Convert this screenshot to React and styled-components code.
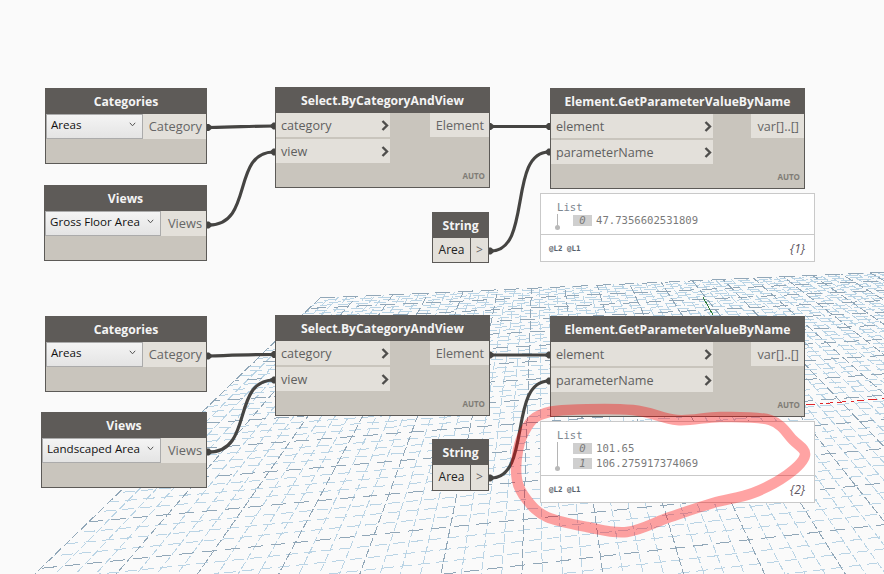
import React from "react";
import styled, { createGlobalStyle } from "styled-components";

const Global = createGlobalStyle`
  html, body { margin: 0; padding: 0; background: #fafafa; }
  #root { width: 884px; height: 574px; overflow: hidden; }
`;

const Canvas = styled.div`
  position: relative;
  width: 884px;
  height: 574px;
  overflow: hidden;
  background: #fafafa;
  font-family: "Open Sans", "Liberation Sans", sans-serif;
`;

const Layer = styled.svg`
  position: absolute;
  left: 0;
  top: 0;
  width: 884px;
  height: 574px;
  pointer-events: none;
`;

const NodeBox = styled.div`
  position: absolute;
  left: ${(p) => p.$x}px;
  top: ${(p) => p.$y}px;
  width: ${(p) => p.$w}px;
  height: ${(p) => p.$h}px;
  box-sizing: border-box;
  border: 1px solid #5c5a57;
  background: #c9c5bd;
  display: flex;
  flex-direction: column;
`;

const Header = styled.div`
  height: 26px;
  flex: none;
  margin: -1px -1px 0;
  background: #5e5b58;
  color: #f4f4f4;
  font-size: 12.2px;
  font-weight: 700;
  line-height: 27px;
  text-align: center;
  white-space: nowrap;
  overflow: hidden;
`;

const Body = styled.div`
  flex: 1;
  display: flex;
  justify-content: space-between;
  align-items: flex-start;
  position: relative;
`;

const Inputs = styled.div`
  display: flex;
  flex-direction: column;
  gap: 2px;
  width: ${(p) => p.$w}px;
`;

const InputRow = styled.div`
  box-sizing: border-box;
  height: 24px;
  background: #e3e0da;
  color: #5f5f5f;
  font-size: 12.6px;
  padding: 1px 1px 0 5px;
  display: flex;
  align-items: center;
  justify-content: space-between;
`;

const Output = styled.div`
  height: 24px;
  background: #e3e0da;
  color: #666;
  font-size: 12.6px;
  line-height: 26px;
  padding: 0 5px 0 6px;
  white-space: nowrap;
  overflow: hidden;
`;

const SelectorRow = styled.div`
  width: 100%;
  height: 25px;
  display: flex;
  background: #e3e0da;
`;

const Combo = styled.div`
  box-sizing: border-box;
  width: ${(p) => p.$w}px;
  height: 25px;
  border: 1px solid #ababab;
  background: linear-gradient(#f4f4f4, #e4e4e4);
  color: #111;
  font-size: 11.6px;
  padding: 0 6px 5px 4px;
  display: flex;
  align-items: center;
  justify-content: space-between;
  white-space: nowrap;
`;

const SelectorOut = styled.div`
  flex: 1;
  text-align: right;
  color: #666;
  font-size: 12.8px;
  line-height: 25px;
  padding-right: 4px;
  overflow: hidden;
`;

const AutoTag = styled.span`
  position: absolute;
  right: 4px;
  bottom: 6px;
  color: #7f7c76;
  font-size: 8px;
  font-weight: 700;
  line-height: 10px;
`;

const StringRow = styled.div`
  display: flex;
  flex: 1;
  min-height: 0;
  width: 100%;
  background: #5e5b58;
  gap: 1px;
`;

const StringField = styled.div`
  width: 37px;
  background: #e3e0da;
  color: #222;
  font-size: 12px;
  line-height: 24px;
  text-align: center;
  overflow: hidden;
`;

const StringPort = styled.div`
  flex: 1;
  background: #e3e0da;
  color: #666;
  font-size: 12px;
  line-height: 24px;
  text-align: center;
  overflow: hidden;
`;

const Watch = styled.div`
  position: absolute;
  left: 540px;
  top: ${(p) => p.$y}px;
  width: 275px;
  height: ${(p) => p.$h}px;
  box-sizing: border-box;
  border: 1px solid #c9c9c9;
  background: #fff;
  display: flex;
  flex-direction: column;
`;

const WatchTree = styled.div`
  flex: 1;
  border-bottom: 1px solid #c9c9c9;
  padding: 6px 0 0 16px;
  font-family: "DejaVu Sans Mono", "Liberation Mono", monospace;
  font-size: 10.6px;
  color: #7d8790;
  position: relative;
`;

const ListLabel = styled.div`
  line-height: 14px;
`;

const TreeRows = styled.div`
  display: flex;
  flex-direction: column;
  gap: 4px;
  margin: 0 0 0 16px;
  padding-top: 1px;
`;

const TreeRow = styled.div`
  display: flex;
  align-items: center;
  gap: 4px;
  height: 11px;
`;

const TreeIndex = styled.span`
  width: 19px;
  height: 11px;
  background: #cfcfcf;
  color: #7b7b7b;
  font-style: italic;
  line-height: 11px;
  text-align: center;
`;

const TreeValue = styled.span`
  color: #7a7a7a;
  line-height: 11px;
`;

const TreeStem = styled.i`
  position: absolute;
  left: 16px;
  top: 20px;
  bottom: ${(p) => p.$bottom}px;
  border-left: 1px solid #b5b5b5;
  &::after {
    content: "";
    position: absolute;
    left: -3px;
    bottom: -4px;
    width: 5px;
    height: 5px;
    border-radius: 50%;
    background: #b9b9b9;
  }
`;

const WatchFooter = styled.div`
  height: 26px;
  flex: none;
  display: flex;
  align-items: center;
  justify-content: space-between;
  padding: 0 9px 0 8px;
`;

const Levels = styled.span`
  font-family: "DejaVu Sans Mono", "Liberation Mono", monospace;
  font-size: 7.5px;
  font-weight: 700;
  color: #56606a;
`;

const Count = styled.span`
  font-size: 12px;
  font-style: italic;
  color: #5d5560;
`;

/* ---------- perspective grid ---------- */
const VP1 = [538, 87];
const VP2 = [4700, 97];
const O = [320, 298];
const A = 0.00845;
const B = -0.0468;
const DIV = 4;

const project = (u, v) => {
  const w = A * u + B * v + 1;
  return [
    (A * u * VP2[0] + B * v * VP1[0] + O[0]) / w,
    (A * u * VP2[1] + B * v * VP1[1] + O[1]) / w,
  ];
};

const fmt = (p) => `${p[0].toFixed(1)} ${p[1].toFixed(1)}`;

const buildGrid = () => {
  const vMax = 17;
  const uMax = 26;
  const depthLines = [];
  const crossLines = [];
  for (let i = 0; i <= uMax * DIV; i++) {
    const u = i / DIV;
    depthLines.push({ d: `M${fmt(project(u, 0))}L${fmt(project(u, vMax))}`, off: (i * 7) % 11, major: i % DIV === 0 });
  }
  for (let i = 0; i <= vMax * DIV; i++) {
    const v = i / DIV;
    crossLines.push({ d: `M${fmt(project(0, v))}L${fmt(project(uMax, v))}`, off: (i * 11) % 23, major: i % DIV === 0 });
  }
  return { depthLines, crossLines };
};

const grid = buildGrid();

const GridLine = styled.path`
  stroke: ${(p) => (p.$major ? "#91a7b8" : "#bad4e5")};
  stroke-width: 1;
  stroke-dasharray: ${(p) => p.$dash};
`;

const Grid = () => (
  <Layer viewBox="0 0 884 574" shapeRendering="crispEdges" fill="none">
    {grid.depthLines.filter((l) => !l.major).map((l, i) => (
      <GridLine key={i} d={l.d} $dash="8 3" strokeDashoffset={l.off} />
    ))}
    {grid.crossLines.filter((l) => !l.major).map((l, i) => (
      <GridLine key={i} d={l.d} $dash="12 6" strokeDashoffset={l.off} />
    ))}
    {grid.depthLines.filter((l) => l.major).map((l, i) => (
      <GridLine key={i} d={l.d} $major $dash="9 3" strokeDashoffset={l.off} />
    ))}
    {grid.crossLines.filter((l) => l.major).map((l, i) => (
      <GridLine key={i} d={l.d} $major $dash="15 8" strokeDashoffset={l.off} />
    ))}
    <path d="M703 297L713 315" stroke="#2f7d3a" />
    <path d="M806 405L884 398.5" stroke="#e0262a" strokeDasharray="9 5 3 3 7 4" />
  </Layer>
);

/* ---------- wires ---------- */
const wires = [
  "M209 127.5C240 127 250 126 274 126",
  "M209 225C254 225 231 152 274 152",
  "M491 126.5L549 126.5",
  "M491 251C532 251 508 152 549 152",
  "M209 356C240 355 250 354.500 274 354.500",
  "M209 452C254 452 231 380 274 380",
  "M491 355L549 355",
  "M491 478C532 478 508 381 549 381",
];

const outTabs = [[207, 127.5], [207, 225], [489, 126.5], [489, 251], [207, 356], [207, 452], [489, 355], [489, 478]];
const inTabs = [[275, 126], [275, 152], [550, 126.5], [550, 152], [275, 354.5], [275, 380], [550, 355], [550, 381]];

const Wires = () => (
  <Layer viewBox="0 0 884 574" fill="none">
    {wires.map((d, i) => (
      <path key={i} d={d} stroke="#454442" strokeWidth="3.200" />
    ))}
    {outTabs.map(([x, y], i) => (
      <path key={i} d={`M${x} ${y - 3.5}h2l2.500 2v3l-2.500 2h-2z`} fill="#454442" />
    ))}
    {inTabs.map(([x, y], i) => (
      <path key={i} d={`M${x} ${y - 3.5}h-2l-2.500 2.500v2l2.500 2.500h2z`} fill="#454442" />
    ))}
  </Layer>
);

/* ---------- annotation ---------- */
const ringPts = [
  [567, 410], [633, 410], [677, 420], [720, 417], [770, 420], [793, 440], [805, 455], [787, 475],
  [753, 493], [713, 503], [670, 517], [627, 532], [587, 527], [547, 517], [527, 500], [517, 480],
  [518, 450], [527, 427], [540, 415],
];

const smooth = (pts) => {
  const n = pts.length;
  let d = `M${pts[0][0]} ${pts[0][1]}`;
  for (let i = 0; i < n; i++) {
    const p0 = pts[(i - 1 + n) % n];
    const p1 = pts[i];
    const p2 = pts[(i + 1) % n];
    const p3 = pts[(i + 2) % n];
    const c1 = [p1[0] + (p2[0] - p0[0]) / 6, p1[1] + (p2[1] - p0[1]) / 6];
    const c2 = [p2[0] - (p3[0] - p1[0]) / 6, p2[1] - (p3[1] - p1[1]) / 6];
    d += `C${c1[0].toFixed(1)} ${c1[1].toFixed(1)} ${c2[0].toFixed(1)} ${c2[1].toFixed(1)} ${p2[0]} ${p2[1]}`;
  }
  return d + "Z";
};

const Ring = () => (
  <Layer viewBox="0 0 884 574" fill="none">
    <path d={smooth(ringPts)} stroke="#ff0000" strokeOpacity="0.36" strokeWidth="10.500" strokeLinejoin="round" />
  </Layer>
);

/* ---------- small drawings ---------- */
const Chevron = () => (
  <svg width="8" height="11" viewBox="0 0 8 11" fill="none">
    <path d="M1.500 1L6 5.500L1.500 10" stroke="#4f4e4c" strokeWidth="2.400" />
  </svg>
);

const Caret = () => (
  <svg width="7" height="5" viewBox="0 0 7 5" fill="none">
    <path d="M0.800 0.800L3.500 3.800L6.200 0.800" stroke="#555" strokeWidth="1" />
  </svg>
);

/* ---------- node kinds ---------- */
const SelectorNode = ({ x, y, w, comboW, title, value, out }) => (
  <NodeBox $x={x} $y={y} $w={w} $h={76}>
    <Header>{title}</Header>
    <Body>
      <SelectorRow>
        <Combo $w={comboW}>
          <span>{value}</span>
          <Caret />
        </Combo>
        <SelectorOut>{out}</SelectorOut>
      </SelectorRow>
    </Body>
  </NodeBox>
);

const FunctionNode = ({ x, y, w, h, inW, title, inputs, out }) => (
  <NodeBox $x={x} $y={y} $w={w} $h={h}>
    <Header>{title}</Header>
    <Body>
      <Inputs $w={inW}>
        {inputs.map((name) => (
          <InputRow key={name}>
            <span>{name}</span>
            <Chevron />
          </InputRow>
        ))}
      </Inputs>
      <Output>{out}</Output>
      <AutoTag>AUTO</AutoTag>
    </Body>
  </NodeBox>
);

const StringNode = ({ y, h }) => (
  <NodeBox $x={432} $y={y} $w={57} $h={h}>
    <Header>String</Header>
    <StringRow>
      <StringField>Area</StringField>
      <StringPort>&gt;</StringPort>
    </StringRow>
  </NodeBox>
);

const WatchNode = ({ y, h, values, count, stemBottom }) => (
  <Watch $y={y} $h={h}>
    <WatchTree>
      <ListLabel>List</ListLabel>
      <TreeStem $bottom={stemBottom} />
      <TreeRows>
        {values.map((val, i) => (
          <TreeRow key={val}>
            <TreeIndex>{i}</TreeIndex>
            <TreeValue>{val}</TreeValue>
          </TreeRow>
        ))}
      </TreeRows>
    </WatchTree>
    <WatchFooter>
      <Levels>@L2 @L1</Levels>
      <Count>{count}</Count>
    </WatchFooter>
  </Watch>
);

const SELECT = "Select.ByCategoryAndView";
const GET = "Element.GetParameterValueByName";

export default function App() {
  return (
    <Canvas>
      <Global />
      <Grid />
      <Wires />

      <SelectorNode x={45} y={88} w={162} comboW={97} title="Categories" value="Areas" out="Category" />
      <SelectorNode x={44} y={185} w={163} comboW={116} title="Views" value="Gross Floor Area" out="Views" />
      <FunctionNode x={275} y={87} w={215} h={101} inW={114} title={SELECT} inputs={["category", "view"]} out="Element" />
      <FunctionNode x={550} y={88} w={255} h={101} inW={162} title={GET} inputs={["element", "parameterName"]} out="var[]..[]" />
      <StringNode y={212} h={51} />
      <WatchNode y={193} h={69} values={["47.7356602531809"]} count="{1}" stemBottom={8} />

      <SelectorNode x={45} y={316} w={162} comboW={97} title="Categories" value="Areas" out="Category" />
      <SelectorNode x={41} y={412} w={166} comboW={119} title="Views" value="Landscaped Area" out="Views" />
      <FunctionNode x={275} y={315} w={215} h={101} inW={114} title={SELECT} inputs={["category", "view"]} out="Element" />
      <FunctionNode x={550} y={316} w={255} h={101} inW={162} title={GET} inputs={["element", "parameterName"]} out="var[]..[]" />
      <StringNode y={439} h={52} />
      <WatchNode y={421} h={82} values={["101.65", "106.275917374069"]} count="{2}" stemBottom={8} />

      <Ring />
    </Canvas>
  );
}
